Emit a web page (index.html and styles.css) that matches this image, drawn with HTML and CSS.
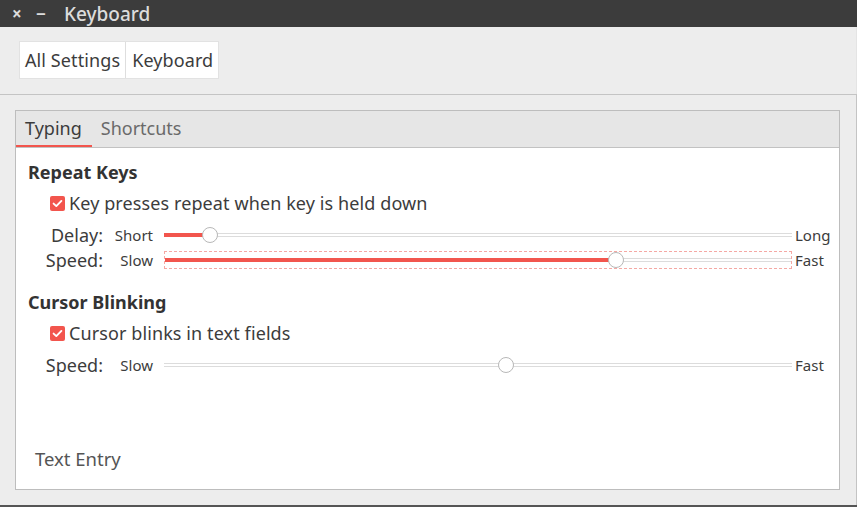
FILE: index.html
```html
<!DOCTYPE html>
<html>
<head>
<meta charset="utf-8">
<link rel="stylesheet" href="styles.css">
</head>
<body>
<div class="window">
  <div class="titlebar">
    <span class="tb-btn tb-close">×</span>
    <span class="tb-btn tb-min">−</span>
    <span class="tb-title">Keyboard</span>
  </div>
  <div class="header">
    <div class="crumbs">
      <span class="crumb">All Settings</span>
      <span class="crumb">Keyboard</span>
    </div>
  </div>
  <div class="main">
    <div class="notebook">
      <div class="tabs">
        <span class="tab active">Typing</span>
        <span class="tab">Shortcuts</span>
      </div>
      <div class="page">
        <div class="heading">Repeat Keys</div>
        <div class="check-row"><span class="check"><svg viewBox="0 0 15 15" width="15" height="15"><path d="M3.6 7.6 L6.3 10.1 L11.4 4.9" fill="none" stroke="#fff" stroke-width="1.9" stroke-linecap="round" stroke-linejoin="round"/></svg></span><span>Key presses repeat when key is held down</span></div>
        <div class="slider-row first">
          <span class="s-label">Delay:</span>
          <span class="s-min">Short</span>
          <span class="s-cell"><span class="track"><span class="fill" style="width:7.3%"></span><span class="knob" style="left:7.3%"></span></span></span>
          <span class="s-max">Long</span>
        </div>
        <div class="slider-row">
          <span class="s-label">Speed:</span>
          <span class="s-min">Slow</span>
          <span class="s-cell"><span class="focus"><span class="track"><span class="fill" style="width:72%"></span><span class="knob" style="left:72%"></span></span></span></span>
          <span class="s-max">Fast</span>
        </div>
        <div class="heading second">Cursor Blinking</div>
        <div class="check-row"><span class="check"><svg viewBox="0 0 15 15" width="15" height="15"><path d="M3.6 7.6 L6.3 10.1 L11.4 4.9" fill="none" stroke="#fff" stroke-width="1.9" stroke-linecap="round" stroke-linejoin="round"/></svg></span><span>Cursor blinks in text fields</span></div>
        <div class="slider-row first">
          <span class="s-label">Speed:</span>
          <span class="s-min">Slow</span>
          <span class="s-cell"><span class="track"><span class="knob" style="left:54.5%"></span></span></span>
          <span class="s-max">Fast</span>
        </div>
        <div class="entry">Text Entry</div>
      </div>
    </div>
  </div>
  <div class="bottom"></div>
</div>
</body>
</html>
```
FILE: styles.css
```css
* { box-sizing: border-box; }
html, body { margin: 0; padding: 0; }
body {
  width: 857px;
  height: 507px;
  overflow: hidden;
  background: #ededed;
  font-family: "Noto Sans", "Open Sans", sans-serif;
  color: #3c3c3c;
}
.window { display: flex; flex-direction: column; height: 507px; }
.titlebar {
  height: 27px;
  background: #3c3c3c;
  color: #dcdcdc;
  display: flex;
  align-items: center;
  flex-shrink: 0;
}
.tb-btn { font-size: 17px; font-weight: bold; line-height: 27px; }
.tb-close { margin-left: 12px; width: 24px; }
.tb-min { width: 28px; }
.tb-title { font-size: 19px; font-weight: 500; line-height: 26px; }
.header {
  height: 67px;
  padding: 15px 0 0 20px;
  flex-shrink: 0;
  border-right: 1px solid #e4e4e4;
}
.crumbs {
  display: inline-flex;
  background: #fff;
  height: 36px;
  box-shadow: 0 0 0 1px #e2e2e2;
}
.crumb {
  font-size: 18px;
  line-height: 36px;
  padding: 0 5px;
  letter-spacing: 0.1px;
}
.crumb + .crumb { border-left: 1px solid #dedede; padding-left: 6px; }
.main {
  flex: 1;
  border-top: 1px solid #c4c4c4;
  border-right: 1px solid #c4c4c4;
  padding: 15px 16px 15px 15px;
  display: flex;
}
.notebook {
  flex: 1;
  border: 1px solid #bdbdbd;
  display: flex;
  flex-direction: column;
}
.tabs {
  height: 37px;
  background: #e6e6e6;
  border-bottom: 1px solid #c2c2c2;
  display: flex;
  flex-shrink: 0;
}
.tab {
  font-size: 18px;
  line-height: 34px;
  padding: 0 10px 0 9px;
  color: #6a6a6a;
}
.tab.active {
  color: #3c3c3c;
  box-shadow: inset 0 -2px 0 #f2554d;
}
.page {
  flex: 1;
  background: #fff;
  padding: 9px 10px 18px 12px;
  display: flex;
  flex-direction: column;
}
.heading {
  font-size: 18px;
  font-weight: bold;
  height: 31px;
  line-height: 30px;
  color: #333;
}
.heading.second { margin-top: 15px; }
.check-row {
  height: 31px;
  display: flex;
  align-items: center;
  padding-left: 22px;
  font-size: 18px;
  letter-spacing: 0.1px;
}
.check-row > span:last-child { position: relative; top: -1px; }
.check {
  width: 15px;
  height: 15px;
  background: #f2554d;
  border-radius: 2px;
  margin-right: 4px;
  display: inline-flex;
}
.slider-row {
  height: 25px;
  display: grid;
  grid-template-columns: 75px 50px 1fr 34px;
  align-items: center;
}
.slider-row.first { margin-top: 3px; }
.s-label { font-size: 18px; text-align: right; line-height: 24px; }
.s-min { font-size: 15px; text-align: right; line-height: 22px; }
.s-max { font-size: 15px; line-height: 22px; }
.s-cell { padding: 0 3px 0 11px; display: flex; align-items: center; }
.focus {
  flex: 1;
  height: 18px;
  border: 1px dashed #f5a8a4;
  display: flex;
  align-items: center;
}
.track {
  flex: 1;
  position: relative;
  height: 4px;
  border-top: 1px solid #dcdcdc;
  border-bottom: 1px solid #dcdcdc;
}
.fill {
  position: absolute;
  left: 0;
  top: -1px;
  height: 4px;
  background: #f2554d;
}
.knob {
  position: absolute;
  top: 50%;
  width: 16px;
  height: 16px;
  margin: -8px 0 0 -8px;
  border-radius: 50%;
  background: #fff;
  border: 1px solid #b8b8b8;
}
.entry {
  margin-top: auto;
  font-size: 18.5px;
  line-height: 24px;
  padding-left: 7px;
  color: #555;
}
.bottom { height: 2px; background: #555; flex-shrink: 0; }
```
